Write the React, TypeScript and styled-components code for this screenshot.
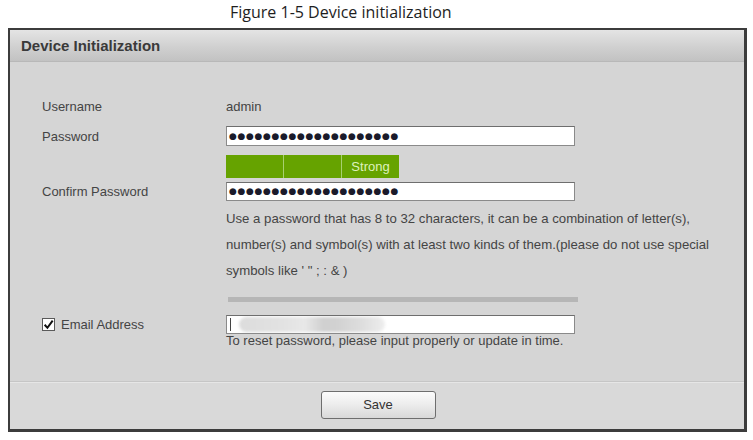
import React from 'react'
import styled, { createGlobalStyle } from 'styled-components'

const GlobalStyle = createGlobalStyle`
    html, body {
        margin: 0;
        padding: 0;
        background: #ffffff;
    }
    body {
        font-family: "Liberation Sans", Arial, sans-serif;
    }
`

const Page = styled.div`
    width: 753px;
    height: 440px;
    padding-left: 8px;
    box-sizing: border-box;
    overflow: hidden;
`

const Caption = styled.div`
    height: 28px;
    padding-left: 222px;
    font-family: "Open Sans", "Noto Sans", sans-serif;
    font-size: 16px;
    line-height: 24px;
    color: #1e1e1e;
`

const Dialog = styled.div`
    width: 739px;
    box-sizing: border-box;
    border: 2px solid #3c3c3c;
    border-right-width: 3px;
    border-bottom-width: 3px;
    background: #d5d5d5;
`

const Header = styled.div`
    height: 31px;
    display: flex;
    align-items: center;
    padding-left: 11px;
    background: linear-gradient(#e4e4e4, #d0d0d0 55%, #c2c2c2);
    border-bottom: 1px solid #b8b8b8;
    font-size: 15px;
    font-weight: bold;
    color: #3a3a3a;
`

const Body = styled.div`
    height: 319px;
    box-sizing: border-box;
    padding: 34px 0 0 32px;
`

const Row = styled.div<{ $top?: number; $height?: number }>`
    display: flex;
    align-items: center;
    margin-top: ${p => p.$top ?? 0}px;
    height: ${p => p.$height ?? 20}px;
`

const Label = styled.div`
    width: 184px;
    flex: none;
    display: flex;
    align-items: center;
    gap: 6px;
    font-size: 13px;
    color: #444;
`

const Value = styled.div`
    font-size: 13px;
    color: #444;
`

const Indent = styled.div`
    padding-left: 184px;
`

const Input = styled.div`
    position: relative;
    width: 349px;
    height: 100%;
    box-sizing: border-box;
    border: 1px solid #8a8a8a;
    border-top-color: #6e6e6e;
    background: #ffffff;
    display: flex;
    align-items: center;
    padding-left: 2px;
    overflow: hidden;
`

const Dots = styled.span`
    font-family: "DejaVu Sans", sans-serif;
    font-size: 9px;
    letter-spacing: 0.65px;
    color: #1a1a2a;
    line-height: 1;
`

const Strength = styled.div`
    display: flex;
    gap: 1px;
    height: 100%;
    background: #a8d070;
`

const Segment = styled.div`
    width: 57px;
    height: 100%;
    background: #66a300;
    display: flex;
    align-items: center;
    justify-content: center;
    font-size: 13px;
    color: #def2bd;
`

const Help = styled.div`
    margin-top: 5px;
    width: 495px;
    font-size: 13.2px;
    line-height: 26px;
    color: #444;
`

const Divider = styled.div`
    margin-top: 13px;
    margin-left: 2px;
    width: 350px;
    height: 5px;
    background: #b6b6b6;
`

const Check = styled.span`
    width: 13px;
    height: 13px;
    box-sizing: border-box;
    border: 1px solid #5a5a5a;
    background: #ffffff;
    display: flex;
    align-items: center;
    justify-content: center;
`

const Caret = styled.span`
    width: 1px;
    height: 13px;
    margin-left: 1px;
    background: #444;
`

const Blur = styled.span`
    position: absolute;
    top: 1px;
    left: 12px;
    width: 146px;
    height: 15px;
    border-radius: 8px;
    background: linear-gradient(90deg, #dcdcdc, #e2e2e2 30%, #e8e8e8 45%, #cfcfcf 58%, #d2d2d2 68%, #dedede 85%, #eeeeee);
    filter: blur(1.5px);
`

const Note = styled.div`
    font-size: 13px;
    line-height: 14px;
    color: #444;
`

const Footer = styled.div`
    height: 48px;
    border-top: 1px solid #c6c6c6;
    box-shadow: inset 0 1px 0 #e6e6e6;
    background: #d9d9d9;
    display: flex;
    justify-content: center;
    align-items: center;
    padding: 0 0 2px 2px;
    box-sizing: border-box;
`

const Button = styled.button`
    width: 115px;
    height: 28px;
    border: 1px solid #6e6e6e;
    border-radius: 3px;
    background: linear-gradient(#fbfbfb, #ececec 50%, #d8d8d8);
    font-family: "Liberation Sans", Arial, sans-serif;
    font-size: 13px;
    color: #333;
    cursor: pointer;
`

const dots = '\u25CF'.repeat(20)

export default function App() {
    return (
        <Page>
            <GlobalStyle />
            <Caption>Figure 1-5 Device initialization</Caption>
            <Dialog>
                <Header>Device Initialization</Header>
                <Body>
                    <Row>
                        <Label>Username</Label>
                        <Value>admin</Value>
                    </Row>
                    <Row $top={10}>
                        <Label>Password</Label>
                        <Input>
                            <Dots>{dots}</Dots>
                        </Input>
                    </Row>
                    <Indent>
                        <Row $top={9} $height={23}>
                            <Strength>
                                <Segment />
                                <Segment />
                                <Segment>Strong</Segment>
                            </Strength>
                        </Row>
                    </Indent>
                    <Row $top={4} $height={19}>
                        <Label>Confirm Password</Label>
                        <Input>
                            <Dots>{dots}</Dots>
                        </Input>
                    </Row>
                    <Indent>
                        <Help>
                            Use a password that has 8 to 32 characters, it can be a combination of letter(s),
                            number(s) and symbol(s) with at least two kinds of them.(please do not use special
                            symbols like ' " ; : &amp; )
                        </Help>
                        <Divider />
                    </Indent>
                    <Row $top={13} $height={19}>
                        <Label>
                            <Check>
                                <svg width="11" height="11" viewBox="0 0 10 10">
                                    <path d="M1.5 5.2 L4 8 L8.8 1.5" fill="none" stroke="#111" strokeWidth="1.8" />
                                </svg>
                            </Check>
                            Email Address
                        </Label>
                        <Input>
                            <Caret />
                            <Blur />
                        </Input>
                    </Row>
                    <Indent>
                        <Note>To reset password, please input properly or update in time.</Note>
                    </Indent>
                </Body>
                <Footer>
                    <Button>Save</Button>
                </Footer>
            </Dialog>
        </Page>
    )
}
